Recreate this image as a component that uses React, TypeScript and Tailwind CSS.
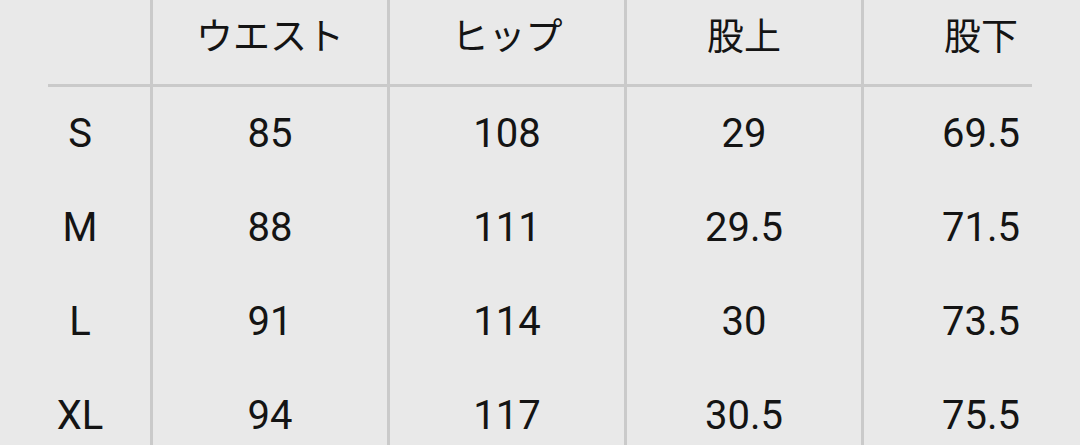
import React from "react";

const headers = ["ウエスト", "ヒップ", "股上", "股下"];
const rows: [string, string[]][] = [
  ["S", ["85", "108", "29", "69.5"]],
  ["M", ["88", "111", "29.5", "71.5"]],
  ["L", ["91", "114", "30", "73.5"]],
  ["XL", ["94", "117", "30.5", "75.5"]],
];

const font = { fontFamily: "Roboto, 'Noto Sans CJK JP', sans-serif" };

export default function App() {
  return (
    <div
      className="w-[1080px] h-[445px] overflow-hidden bg-[#e9e9e9] text-[#141414] flex flex-col"
      style={font}
    >
      <div className="flex h-[84px] shrink-0">
        <div className="w-[150px] shrink-0" />
        {headers.map((h) => (
          <div
            key={h}
            className="w-[237px] shrink-0 border-l-[3px] border-[#cacaca] flex items-center justify-center pb-[10px] text-[37px] leading-none"
          >
            {h}
          </div>
        ))}
      </div>
      <div className="h-[3px] shrink-0 ml-[48px] w-[984px] bg-[#cacaca]" />
      {rows.map(([label, vals]) => (
        <div key={label} className="flex h-[94px] shrink-0">
          <div className="w-[150px] shrink-0 pl-[10px] flex items-center justify-center text-[40px] leading-none">
            {label}
          </div>
          {vals.map((v, i) => (
            <div
              key={i}
              className="w-[237px] shrink-0 border-l-[3px] border-[#cacaca] flex items-center justify-center text-[40px] leading-none"
            >
              {v}
            </div>
          ))}
        </div>
      ))}
    </div>
  );
}
